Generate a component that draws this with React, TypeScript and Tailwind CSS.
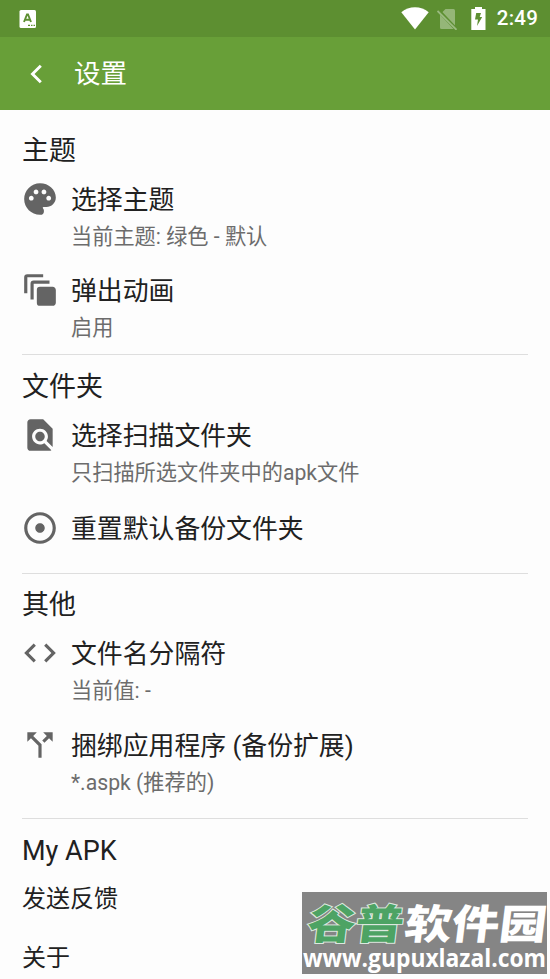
import type { ReactNode } from "react";
import {
  MdAdjust,
  MdAutoAwesomeMotion,
  MdCallSplit,
  MdCode,
  MdFindInPage,
  MdPalette,
} from "react-icons/md";

type SettingItemProps = {
  icon: ReactNode;
  title: string;
  summary?: string;
};

function StatusBar() {
  return (
    <div className="flex h-[37px] items-center bg-[#5d8f31] pl-[19px] pr-[12px] text-white">
      <svg width="18" height="20" viewBox="0 0 18 20" className="shrink-0">
        <rect x="0.5" y="1" width="16.5" height="18" rx="1.5" fill="#fff" />
        <path d="M5 13 8 5.5h1L12 13M6 10.8h5" fill="none" stroke="#5d8f31" strokeWidth="1.9" />
        <path d="M9 16.3h2M12 16.3h1.5M14.5 16.3h1.5" stroke="#5d8f31" strokeWidth="1.2" />
      </svg>
      <div className="ml-auto flex items-center">
        <svg width="28" height="23" viewBox="0 0 28 23">
          <path d="M14 22.5.3 5.3C4.2 2.1 9 .3 14 .3s9.800 1.800 13.700 5z" fill="#fff" />
        </svg>
        <svg width="20" height="22" viewBox="0 0 20 22" className="ml-[8px]">
          <path d="M8.500 1H16.500Q18 1 18 2.500V20Q18 21 17 21H4.500Q3 21 3 19.500V6.500z" fill="#fff" opacity="0.35" />
          <path d="M1.500 2.500 19.500 21.500" stroke="#5d8f31" strokeWidth="3.500" />
          <path d="M.5 3 19.500 21.800" stroke="#9bba80" strokeWidth="1.800" />
        </svg>
        <svg width="15" height="23" viewBox="0 0 15 23" className="ml-[14px]">
          <path d="M4 0h7v2h3.500v21H.3V2H4z" fill="#fff" />
          <path d="M5.200 6h4.800L8.700 10h2.500L6 19l1-6.500H4z" fill="#5d8f31" />
        </svg>
        <span className="ml-[11px] text-[20.500px] leading-none font-medium tracking-[0.2px]">2:49</span>
      </div>
    </div>
  );
}

function AppBar() {
  return (
    <header className="flex h-[73px] items-center bg-[#689f38] pl-[29px] text-white">
      <svg width="14" height="20" viewBox="0 0 14 20" fill="none">
        <path d="M11.800 1.800 3.500 10l8.300 8.200" stroke="currentColor" strokeWidth="2.900" />
      </svg>
      <h1 className="ml-[31px] text-[26.500px] leading-[38px]">设置</h1>
    </header>
  );
}

function SectionTitle({ children }: { children: ReactNode }) {
  return <h2 className="text-[27px] leading-[38px]">{children}</h2>;
}

function SettingItem({ icon, title, summary }: SettingItemProps) {
  return (
    <div className="flex">
      <div className="-ml-[1.500px] -mt-[2px] w-[50.500px] shrink-0 text-[38px] text-[#646464]">{icon}</div>
      <div>
        <div className="text-[25.850px] leading-[36px]">{title}</div>
        {summary ? <div className="mt-1 text-[21.200px] leading-[30px] text-[#6c6c6c]">{summary}</div> : null}
      </div>
    </div>
  );
}

function Watermark() {
  return (
    <svg
      width="245"
      height="83"
      viewBox="0 0 245 83"
      className="absolute top-[892px] left-[302px]"
      fontFamily='"Noto Sans CJK SC", sans-serif'
    >
      <rect width="245" height="82" fill="#858585" />
      <g transform="translate(4 47) skewX(-7)" fontWeight="900" fontSize="41">
        <text
          textLength="96"
          lengthAdjust="spacingAndGlyphs"
          fill="#4da364"
          stroke="#dce8df"
          strokeWidth="2"
          paintOrder="stroke"
        >
          谷普
        </text>
        <text x="97" textLength="142" lengthAdjust="spacingAndGlyphs" fill="#fff">
          软件园
        </text>
      </g>
      <text
        x="1"
        y="75"
        textLength="243"
        lengthAdjust="spacingAndGlyphs"
        fontFamily='"Open Sans", sans-serif'
        fontWeight="700"
        fontSize="25"
        fill="#fff"
      >
        www.gupuxlazal.com
      </text>
    </svg>
  );
}

export default function App() {
  return (
    <div className="relative h-[979px] w-[550px] overflow-hidden bg-[#fdfdfd] font-[Roboto,'Noto_Sans_CJK_SC',sans-serif] text-[#212121]">
      <StatusBar />
      <AppBar />
      <main className="px-[22px]">
        <section className="border-b border-[#dedede] pt-[22px] pb-[11px]">
          <SectionTitle>主题</SectionTitle>
          <div className="mt-[12px] flex flex-col gap-[21px]">
            <SettingItem icon={<MdPalette />} title="选择主题" summary="当前主题: 绿色 - 默认" />
            <SettingItem icon={<MdAutoAwesomeMotion />} title="弹出动画" summary="启用" />
          </div>
        </section>
        <section className="border-b border-[#dedede] pt-[13px] pb-[26px]">
          <SectionTitle>文件夹</SectionTitle>
          <div className="mt-[12px] flex flex-col gap-[23px]">
            <SettingItem icon={<MdFindInPage />} title="选择扫描文件夹" summary="只扫描所选文件夹中的apk文件" />
            <SettingItem icon={<MdAdjust />} title="重置默认备份文件夹" />
          </div>
        </section>
        <section className="border-b border-[#dedede] pt-[12px] pb-[20px]">
          <SectionTitle>其他</SectionTitle>
          <div className="mt-[12px] flex flex-col gap-[22px]">
            <SettingItem icon={<MdCode />} title="文件名分隔符" summary="当前值: -" />
            <SettingItem icon={<MdCallSplit />} title="捆绑应用程序 (备份扩展)" summary="*.aspk (推荐的)" />
          </div>
        </section>
        <section className="pt-[13px]">
          <SectionTitle>My APK</SectionTitle>
          <div className="mt-[11px] flex flex-col gap-[23px] text-[24px] leading-[36px]">
            <div>发送反馈</div>
            <div>关于</div>
          </div>
        </section>
      </main>
      <Watermark />
    </div>
  );
}
